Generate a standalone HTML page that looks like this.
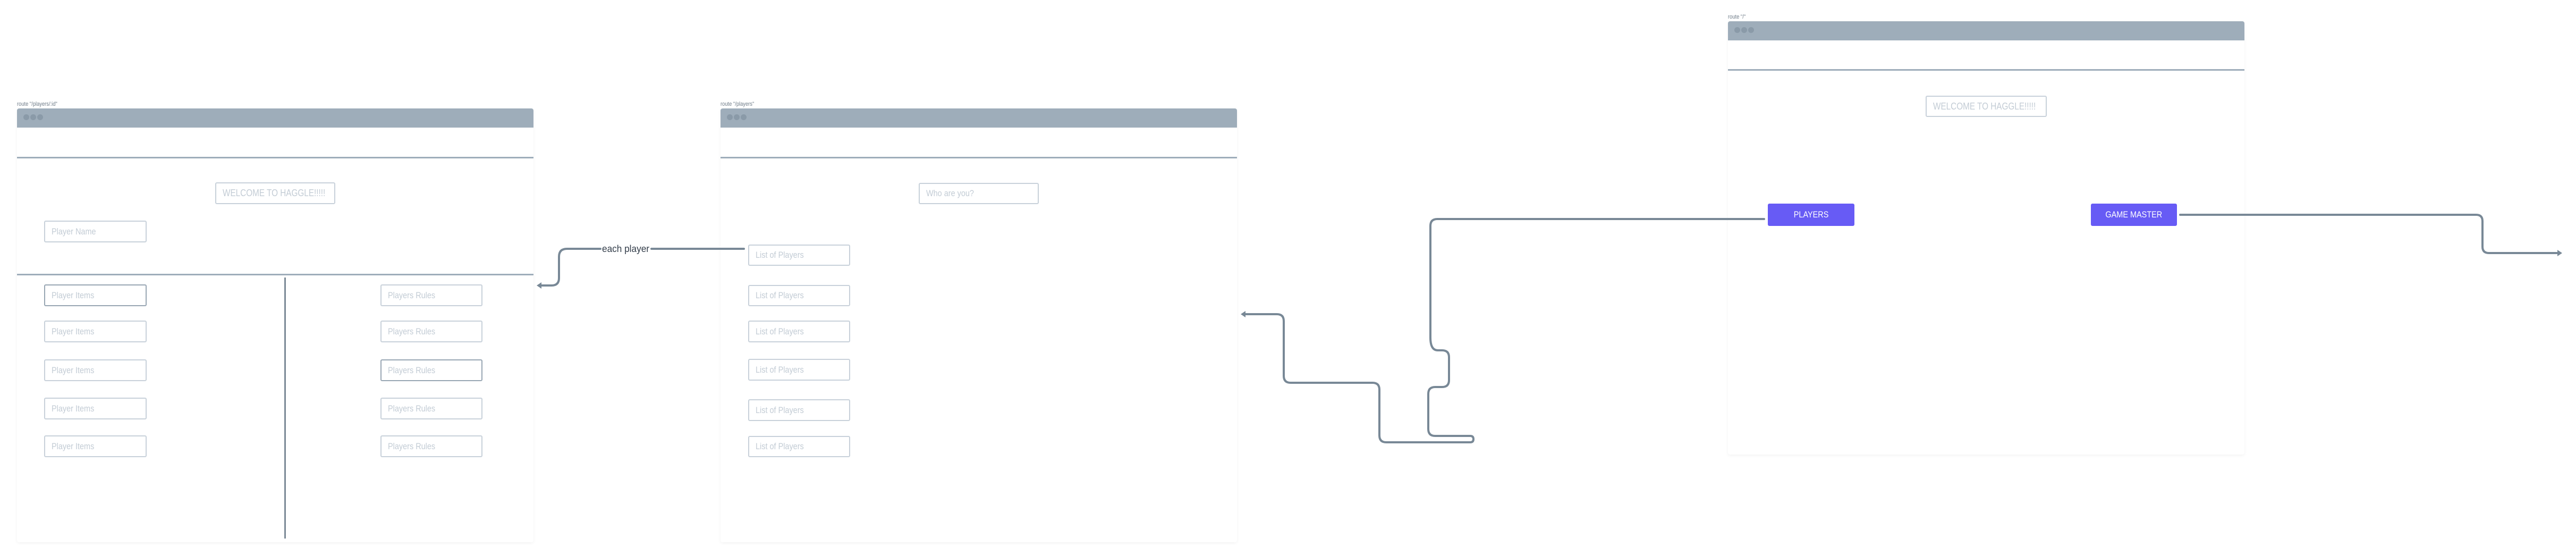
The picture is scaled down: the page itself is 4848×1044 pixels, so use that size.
<!DOCTYPE html>
<html><head><meta charset="utf-8">
<style>
html,body{margin:0;padding:0;background:#fff;}
body{width:4848px;height:1044px;position:relative;overflow:hidden;font-family:"Liberation Sans",sans-serif;}
.frame{position:absolute;background:#fff;box-shadow:0 2px 6px rgba(0,0,0,0.05);border-radius:4px;}
.bar{position:absolute;left:0;right:0;top:0;height:36px;background:#9eadba;border-radius:4px 4px 0 0;}
.dot{position:absolute;top:11px;width:11px;height:11px;border-radius:50%;background:#8a9aa8;}
.div{position:absolute;left:0;right:0;height:3px;background:#9eadba;}
.lbl{position:absolute;font-size:11px;color:#6f7c88;transform:scaleX(0.85);transform-origin:left;white-space:nowrap;}
.box{position:absolute;box-sizing:border-box;border:2px solid #c8d1da;border-radius:3px;color:#c3ccd5;font-size:17px;padding-left:12px;display:flex;align-items:center;white-space:nowrap;}
.box span{display:inline-block;transform:scaleX(0.85);transform-origin:left;}
.box.dk{border-color:#98a6b3;}
.btn{position:absolute;background:#675bf5;color:#fff;border-radius:3px;font-size:17px;display:flex;align-items:center;justify-content:center;}
.btn span{display:inline-block;transform:scaleX(0.85);}
</style></head><body>

<!-- Left frame -->
<div class="lbl" style="left:32px;top:190px;">route "/players/:id"</div>
<div class="frame" style="left:32px;top:204px;width:972px;height:816px;">
  <div class="bar"><div class="dot" style="left:12px"></div><div class="dot" style="left:25px"></div><div class="dot" style="left:38px"></div></div>
  <div class="div" style="top:91px"></div>
  <div class="div" style="top:311px"></div>
  <div style="position:absolute;left:503px;top:318px;width:3px;height:491px;background:#7c8a97;"></div>
</div>
<div class="box" style="left:405px;top:343px;width:226px;height:41px;font-size:18px;"><span>WELCOME TO HAGGLE!!!!!</span></div>
<div class="box" style="left:83px;top:415px;width:193px;height:41px;"><span>Player Name</span></div>
<div class="box dk" style="left:83px;top:535px;width:193px;height:41px;"><span>Player Items</span></div>
<div class="box" style="left:83px;top:603px;width:193px;height:41px;"><span>Player Items</span></div>
<div class="box" style="left:83px;top:676px;width:193px;height:41px;"><span>Player Items</span></div>
<div class="box" style="left:83px;top:748px;width:193px;height:41px;"><span>Player Items</span></div>
<div class="box" style="left:83px;top:819px;width:193px;height:41px;"><span>Player Items</span></div>
<div class="box" style="left:716px;top:535px;width:192px;height:41px;"><span>Players Rules</span></div>
<div class="box" style="left:716px;top:603px;width:192px;height:41px;"><span>Players Rules</span></div>
<div class="box dk" style="left:716px;top:676px;width:192px;height:41px;"><span>Players Rules</span></div>
<div class="box" style="left:716px;top:748px;width:192px;height:41px;"><span>Players Rules</span></div>
<div class="box" style="left:716px;top:819px;width:192px;height:41px;"><span>Players Rules</span></div>

<!-- Middle frame -->
<div class="lbl" style="left:1356px;top:190px;">route "/players"</div>
<div class="frame" style="left:1356px;top:204px;width:972px;height:816px;">
  <div class="bar"><div class="dot" style="left:12px"></div><div class="dot" style="left:25px"></div><div class="dot" style="left:38px"></div></div>
  <div class="div" style="top:91px"></div>
</div>
<div class="box" style="left:1729px;top:344px;width:226px;height:40px;"><span>Who are you?</span></div>
<div class="box" style="left:1408px;top:460px;width:192px;height:40px;"><span>List of Players</span></div>
<div class="box" style="left:1408px;top:536px;width:192px;height:40px;"><span>List of Players</span></div>
<div class="box" style="left:1408px;top:603px;width:192px;height:41px;"><span>List of Players</span></div>
<div class="box" style="left:1408px;top:675px;width:192px;height:41px;"><span>List of Players</span></div>
<div class="box" style="left:1408px;top:751px;width:192px;height:41px;"><span>List of Players</span></div>
<div class="box" style="left:1408px;top:820px;width:192px;height:40px;"><span>List of Players</span></div>

<!-- Right frame -->
<div class="lbl" style="left:3252px;top:26px;">route "/"</div>
<div class="frame" style="left:3252px;top:40px;width:972px;height:815px;">
  <div class="bar"><div class="dot" style="left:12px"></div><div class="dot" style="left:25px"></div><div class="dot" style="left:38px"></div></div>
  <div class="div" style="top:90px"></div>
</div>
<div class="box" style="left:3624px;top:180px;width:228px;height:40px;font-size:18px;"><span>WELCOME TO HAGGLE!!!!!</span></div>
<div class="btn" style="left:3327px;top:383px;width:163px;height:42px;"><span>PLAYERS</span></div>
<div class="btn" style="left:3935px;top:383px;width:162px;height:42px;"><span>GAME MASTER</span></div>

<!-- connectors -->
<svg style="position:absolute;left:0;top:0" width="4848" height="1044" viewBox="0 0 4848 1044">
  <g fill="none" stroke="#788896" stroke-width="4" stroke-linecap="round" stroke-linejoin="round">
    <path d="M1400 468 H1226"/>
    <path d="M1130 468 H1067 Q1052 468 1052 483 V523 Q1052 537 1038 537 H1016"/>
    <path d="M3320 412 H2705 Q2692 412 2692 425 V635 Q2692 659 2706 659 H2714 Q2727 659 2727 672 V715 Q2727 728 2714 728 H2701 Q2688 728 2688 741 V807 Q2688 820 2701 820 H2767 Q2773 820 2773 826 Q2773 832 2767 832 H2609 Q2596 832 2596 819 V733 Q2596 720 2583 720 H2429 Q2416 720 2416 707 V604 Q2416 591 2403 591 H2342"/>
    <path d="M4103 404 H4660 Q4672 404 4672 416 V464 Q4672 476 4684 476 H4812"/>
  </g>
  <g fill="#788896">
    <path d="M1010 537 L1019 531 L1019 543 Z"/>
    <path d="M2335 591 L2344 585 L2344 597 Z"/>
    <path d="M4822 476 L4813 470 L4813 482 Z"/>
  </g>
  <text x="1133" y="474" font-family="Liberation Sans, sans-serif" font-size="18" fill="#333d4a" textLength="89" lengthAdjust="spacingAndGlyphs">each player</text>
</svg>
</body></html>
